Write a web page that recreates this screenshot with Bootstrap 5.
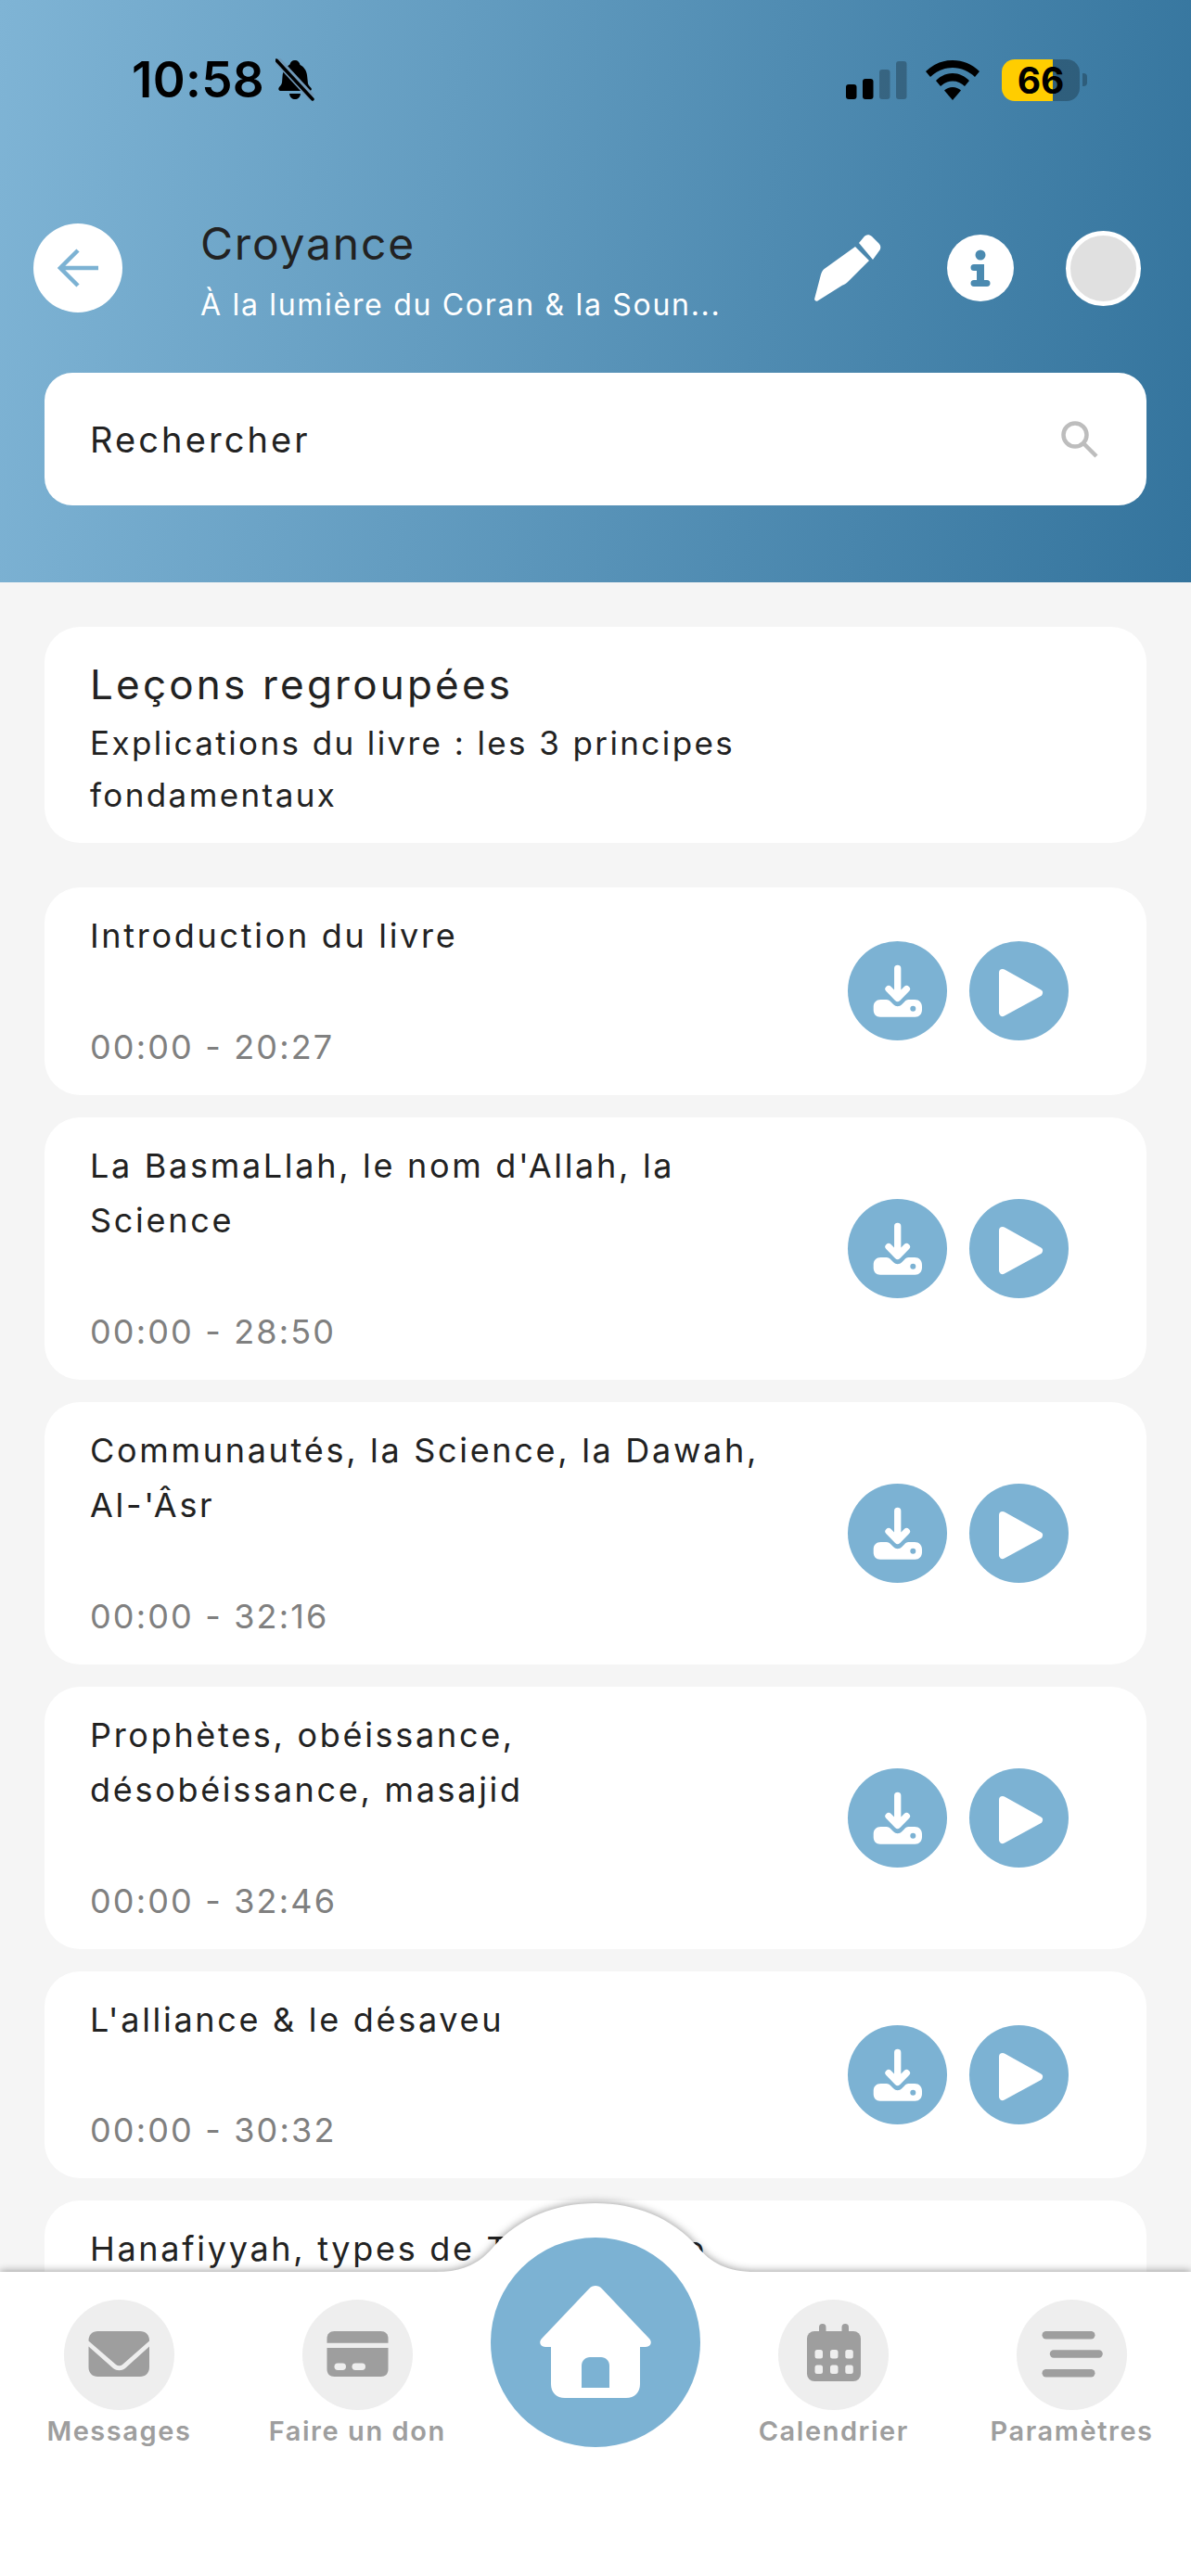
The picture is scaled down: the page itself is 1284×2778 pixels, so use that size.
<!DOCTYPE html>
<html lang="fr">
<head>
<meta charset="utf-8">
<title>Croyance</title>
<link href="https://cdn.jsdelivr.net/npm/bootstrap@5.3.0/dist/css/bootstrap.min.css" rel="stylesheet">
<style>
body{background:#f5f5f5;font-family:"Inter","Liberation Sans",sans-serif;color:#222}
.app-hero{height:628px;flex:none;background:linear-gradient(97deg,#7fb4d5 0%,#34749d 100%);padding:63px 48px 0 36px}
.status-row{height:46px;padding:0 64px 0 106px}
.status-time{font-size:53px;font-weight:600;line-height:46px;color:#000;letter-spacing:.3px}
.batt{width:84px;height:45px;border-radius:14px;background:linear-gradient(90deg,#ffcd00 65.5%,rgba(0,0,0,.25) 65.5%);font-size:39px;font-weight:700;line-height:45px;color:#000;text-align:center}
.batt-nub{width:5px;height:14px;border-radius:0 4px 4px 0;background:rgba(0,0,0,.25);margin-left:3px}
.bar-row{margin-top:132px;height:96px}
.round-back{width:96px;height:96px;background:#fff;flex:none}
.hero-text{margin-left:84px;width:600px;margin-top:8px}
.hero-title{font-size:48px;line-height:60px;font-weight:400;color:#222;letter-spacing:1.8px;margin-top:-2px}
.hero-sub{font-size:32px;line-height:44px;font-weight:400;color:#fff;letter-spacing:1.700px;margin-top:14px;white-space:nowrap}
.avatar-ring{width:81px;height:81px;border:5px solid #fff;background:#e0e0e0;flex:none;margin-left:56px;margin-right:6px}
.find-box{margin:65px 0 0 12px;height:143px;background:#fff;border-radius:30px;padding:0 52px 0 49px}
.find-label{font-size:38px;font-weight:400;letter-spacing:3.100px;color:#222;position:relative;top:1px}
.list-area{padding:48px 48px 0;gap:24px}
.lesson{border:0;border-radius:38px;background:#fff;flex-shrink:0}
.group-card{padding:32px 49px 24px;margin-bottom:24px}
.group-title{font-size:44px;line-height:60px;font-weight:400;letter-spacing:3.200px;color:#222;margin-bottom:5px}
.group-sub{font-size:35px;line-height:56px;font-weight:400;letter-spacing:2.400px;color:#222;max-width:793px}
.lesson-row{padding:22px 84px 22px 49px}
.lesson-text{width:793px;flex:none;padding-top:1px}
.lesson-title{font-size:36px;line-height:59.5px;font-weight:400;letter-spacing:2.700px;color:#222;max-width:750px}
.lesson-time{font-size:36px;line-height:60px;font-weight:400;margin-top:59px;letter-spacing:2.150px;color:#808080}
.lesson-tall{min-height:223px}
.ic-btn{width:107px;height:107px;background:#7cb2d3;border:0;padding:0;flex:none}
.ic-btn:hover{background:#7cb2d3}
.dock{position:absolute;left:0;right:0;bottom:0;height:328px;padding-top:30px}
.dock-bg{position:absolute;left:0;top:-74px;width:1284px;height:402px;filter:drop-shadow(0 -1px 4px rgba(0,0,0,.38))}
.dock-col{width:20%;position:relative}
.dock-ic{width:119px;height:119px;background:#eee}
.dock-label{font-size:29px;font-weight:600;line-height:40px;margin-top:3px;color:#9e9e9e;letter-spacing:1.550px;white-space:nowrap}
.home-disc{width:226px;height:226px;background:#7cb2d3;margin-top:-67px}
.no-wrap{white-space:nowrap}
</style>
</head>
<body>
<div class="d-flex flex-column vh-100 overflow-hidden position-relative">
  <header class="app-hero">
    <div class="status-row d-flex align-items-center">
      <span class="status-time">10:58</span>
      <svg style="margin-left:12px" width="42" height="46" viewBox="0 0 42 46"><path d="M21 2c3 0 5 2 5.500 5 4 2 7 6 7.500 11l1 9c.3 2 2 3 3.500 5 1 1.500 0 3-2 3H6c-2.500 0-3.500-2-2-4 1.500-1.500 2.500-3 3-5l.5-6c.3-7 4-11 8-13.500C16 4 18 2 21 2z" fill="#000"/><path d="M15 38h12c-.5 4-3 6-6 6s-5.500-2-6-6z" fill="#000"/><path d="M1 1l38 41" stroke="#7099b8" stroke-width="8"/><path d="M1 2l39 42" stroke="#000" stroke-width="3.500" stroke-linecap="round"/></svg>
      <svg class="ms-auto" width="70" height="41" viewBox="0 0 70 41"><rect x="0" y="25" width="11.500" height="16" rx="3" fill="#000"/><rect x="18" y="19" width="11.500" height="22" rx="3" fill="#000"/><rect x="36" y="9" width="11.500" height="32" rx="3" fill="rgba(0,0,0,.25)"/><rect x="54" y="0" width="11.500" height="41" rx="3" fill="rgba(0,0,0,.25)"/></svg>
      <svg class="ms-3" width="58" height="43" viewBox="0 0 58 43"><path d="M29 0c11 0 21 4 29 12l-5 6C47 12 38 8 29 8S11 12 5 18l-5-6C8 4 18 0 29 0z" fill="#000"/><path d="M29 14c7 0 13 3 18 8l-5 6c-3.500-3.500-8-5.500-13-5.500S19.500 24.500 16 28l-5-6c5-5 11-8 18-8z" fill="#000"/><path d="M29 29c3.500 0 6.500 1.500 9 3.500L29 43l-9-10.500c2.500-2 5.500-3.500 9-3.500z" fill="#000"/></svg>
      <div class="batt ms-4">66</div>
      <div class="batt-nub"></div>
    </div>
    <div class="bar-row d-flex align-items-center">
      <button class="round-back btn rounded-circle p-0 d-flex align-items-center justify-content-center" type="button" aria-label="Retour">
        <svg width="44" height="42" viewBox="0 0 44 42" fill="none" stroke="#7cb2d3" stroke-width="4.500"><path d="M44 21H3M22 2L3 21l19 19"/></svg>
      </button>
      <div class="hero-text">
        <div class="hero-title">Croyance</div>
        <div class="hero-sub">À la lumière du Coran &amp; la Soun...</div>
      </div>
      <svg class="ms-auto" width="72" height="72" viewBox="0 0 72 72"><path d="M44 13l15 15-23 23c-2 2-3.500 3-6 3.700L3 71.800c-1.800.4-3.200-1-2.800-2.800L7 43c.7-2.300 1.500-4 3.300-5.800z" fill="#fff"/><path d="M48 9l5-6c2.500-3.500 6-3.500 9-1l7 7c3 3 3 6 .5 9L63 27z" fill="#fff"/></svg>
      <svg style="margin-left:71px" width="72" height="72" viewBox="0 0 72 72"><circle cx="36" cy="36" r="36" fill="#fff"/><g fill="#4b8ab0"><circle cx="36" cy="22" r="5.500"/><path d="M29 32h11v17h3a3.500 3.500 0 0 1 0 7H29a3.500 3.500 0 0 1 0-7h3v-10h-3a3.500 3.500 0 0 1 0-7z"/></g></svg>
      <div class="avatar-ring rounded-circle"></div>
    </div>
    <div class="find-box d-flex align-items-center justify-content-between">
      <span class="find-label">Rechercher</span>
      <svg width="40" height="40" viewBox="0 0 40 40" fill="none" stroke="#bdbdbd" stroke-width="4.500"><circle cx="15" cy="15" r="12.500"/><path d="M24 24l14 14"/></svg>
    </div>
  </header>

  <main class="list-area d-flex flex-column flex-grow-1">
    <section class="card lesson group-card">
      <div class="group-title">Leçons regroupées</div>
      <div class="group-sub">Explications du livre : les 3 principes fondamentaux</div>
    </section>

    <article class="card lesson"><div class="lesson-row d-flex align-items-center gap-4">
      <div class="lesson-text"><div class="lesson-title">Introduction du livre</div><div class="lesson-time">00:00 - 20:27</div></div>
      <button class="btn ic-btn rounded-circle" type="button" aria-label="Télécharger"><svg width="107" height="107" viewBox="0 0 107 107"><use href="#dl"/></svg></button>
      <button class="btn ic-btn rounded-circle" type="button" aria-label="Lire"><svg width="107" height="107" viewBox="0 0 107 107"><use href="#pl"/></svg></button>
    </div></article>

    <article class="card lesson"><div class="lesson-row d-flex align-items-center gap-4">
      <div class="lesson-text"><div class="lesson-title">La BasmaLlah, le nom d'Allah, la Science</div><div class="lesson-time">00:00 - 28:50</div></div>
      <button class="btn ic-btn rounded-circle" type="button" aria-label="Télécharger"><svg width="107" height="107" viewBox="0 0 107 107"><use href="#dl"/></svg></button>
      <button class="btn ic-btn rounded-circle" type="button" aria-label="Lire"><svg width="107" height="107" viewBox="0 0 107 107"><use href="#pl"/></svg></button>
    </div></article>

    <article class="card lesson"><div class="lesson-row d-flex align-items-center gap-4">
      <div class="lesson-text"><div class="lesson-title">Communautés, la Science, la Dawah, <span class="no-wrap">Al-'Âsr</span></div><div class="lesson-time">00:00 - 32:16</div></div>
      <button class="btn ic-btn rounded-circle" type="button" aria-label="Télécharger"><svg width="107" height="107" viewBox="0 0 107 107"><use href="#dl"/></svg></button>
      <button class="btn ic-btn rounded-circle" type="button" aria-label="Lire"><svg width="107" height="107" viewBox="0 0 107 107"><use href="#pl"/></svg></button>
    </div></article>

    <article class="card lesson"><div class="lesson-row d-flex align-items-center gap-4">
      <div class="lesson-text"><div class="lesson-title">Prophètes, obéissance, désobéissance, masajid</div><div class="lesson-time">00:00 - 32:46</div></div>
      <button class="btn ic-btn rounded-circle" type="button" aria-label="Télécharger"><svg width="107" height="107" viewBox="0 0 107 107"><use href="#dl"/></svg></button>
      <button class="btn ic-btn rounded-circle" type="button" aria-label="Lire"><svg width="107" height="107" viewBox="0 0 107 107"><use href="#pl"/></svg></button>
    </div></article>

    <article class="card lesson"><div class="lesson-row d-flex align-items-center gap-4">
      <div class="lesson-text"><div class="lesson-title">L'alliance &amp; le désaveu</div><div class="lesson-time">00:00 - 30:32</div></div>
      <button class="btn ic-btn rounded-circle" type="button" aria-label="Télécharger"><svg width="107" height="107" viewBox="0 0 107 107"><use href="#dl"/></svg></button>
      <button class="btn ic-btn rounded-circle" type="button" aria-label="Lire"><svg width="107" height="107" viewBox="0 0 107 107"><use href="#pl"/></svg></button>
    </div></article>

    <article class="card lesson lesson-tall"><div class="lesson-row d-flex align-items-center gap-4">
      <div class="lesson-text"><div class="lesson-title">Hanafiyyah, types de Tawhid et le</div></div>
    </div></article>
  </main>

  <nav class="dock d-flex">
    <svg class="dock-bg" viewBox="0 0 1284 402"><path d="M0 74H470C500 74 518 64 532 47C560 15 600 0 642 0C684 0 724 15 752 47C766 64 784 74 814 74H1284V402H0Z" fill="#fff"/></svg>
    <div class="dock-col d-flex flex-column align-items-center">
      <div class="dock-ic rounded-circle"><svg width="119" height="119" viewBox="0 0 119 119"><path d="M26.500 44c0-6 4-10 10-10h45.500c6 0 10 4 10 10v.500L63 70c-2 1.700-5 1.700-7 0L26.500 44.500z" fill="#9e9e9e"/><path d="M26.500 50.500L53 74c4 3 9 3 13 0l26-23.500V73c0 6-4 10-10 10H36.500c-6 0-10-4-10-10z" fill="#9e9e9e"/></svg></div>
      <div class="dock-label">Messages</div>
    </div>
    <div class="dock-col d-flex flex-column align-items-center">
      <div class="dock-ic rounded-circle"><svg width="119" height="119" viewBox="0 0 119 119"><path d="M26.500 46.700V42c0-5 3-8 8-8h50c5 0 8 3 8 8v4.700z" fill="#9e9e9e"/><path d="M26.500 52h66v23c0 5-3 8-8 8h-50c-5 0-8-3-8-8z" fill="#9e9e9e"/><rect x="34.500" y="68.500" width="12.500" height="7.500" rx="3.700" fill="#eee"/><rect x="53.500" y="68.500" width="14.500" height="7.500" rx="3.700" fill="#eee"/></svg></div>
      <div class="dock-label">Faire un don</div>
    </div>
    <div class="dock-col d-flex flex-column align-items-center">
      <div class="home-disc rounded-circle"><svg width="226" height="226" viewBox="0 0 226 226"><path d="M113 52c2.500 0 5 1 7 3.200L171 109c3.500 3.800 1.500 9-4 9h-6v40c0 9-6 15-15 15H80c-9 0-15-6-15-15v-40h-6c-5.500 0-7.500-5.200-4-9l51-53.800c2-2.200 4.500-3.200 7-3.200z" fill="#fff"/><path d="M98 162v-24c0-5 4-9 9-9h12c5 0 9 4 9 9v24z" fill="#7cb2d3"/></svg></div>
    </div>
    <div class="dock-col d-flex flex-column align-items-center">
      <div class="dock-ic rounded-circle"><svg width="119" height="119" viewBox="0 0 119 119"><rect x="44" y="26" width="7.500" height="14" rx="3.700" fill="#9e9e9e"/><rect x="68.500" y="26" width="7.500" height="14" rx="3.700" fill="#9e9e9e"/><rect x="31" y="34" width="58" height="54" rx="8" fill="#9e9e9e"/><g fill="#eee"><rect x="39.500" y="54" width="8.500" height="9.500" rx="2.500"/><rect x="56" y="54" width="8.500" height="9.500" rx="2.500"/><rect x="72.300" y="54" width="8.500" height="9.500" rx="2.500"/><rect x="39.500" y="70.500" width="8.500" height="9.500" rx="2.500"/><rect x="56" y="70.500" width="8.500" height="9.500" rx="2.500"/><rect x="72.300" y="70.500" width="8.500" height="9.500" rx="2.500"/></g></svg></div>
      <div class="dock-label">Calendrier</div>
    </div>
    <div class="dock-col d-flex flex-column align-items-center">
      <div class="dock-ic rounded-circle"><svg width="119" height="119" viewBox="0 0 119 119"><rect x="27.500" y="34" width="57" height="8.500" rx="4.200" fill="#9e9e9e"/><rect x="35.800" y="54.300" width="57" height="8.500" rx="4.200" fill="#9e9e9e"/><rect x="27.500" y="75" width="57" height="8.500" rx="4.200" fill="#9e9e9e"/></svg></div>
      <div class="dock-label">Paramètres</div>
    </div>
  </nav>
</div>

<svg width="0" height="0" class="d-block" aria-hidden="true">
  <defs>
    <g id="dl">
      <path d="M53.700 29.500V61M44 51.500l9.700 10 9.700-10" fill="none" stroke="#fff" stroke-width="7.300" stroke-linecap="round" stroke-linejoin="round"/>
      <path d="M35.500 63h6c2.500 0 3.500 1 5 2.500l2.500 2.500c3 3 6.500 3 9.500 0l2.500-2.500C62 64 63.500 63 65.500 63H72c5 0 8 3.500 8 8v3c0 4.500-3 7.700-7.500 7.700H35c-4.500 0-7.300-3-7.300-7.500v-3.500c0-4.500 3-7.700 7.800-7.700z" fill="#fff"/>
      <circle cx="70.300" cy="72.700" r="3" fill="#7cb2d3"/>
    </g>
    <path id="pl" d="M36 34L75 55.700 36 77z" fill="#fff" stroke="#fff" stroke-width="8" stroke-linejoin="round"/>
  </defs>
</svg>
<script src="https://cdn.jsdelivr.net/npm/bootstrap@5.3.0/dist/js/bootstrap.bundle.min.js"></script>
</body>
</html>
